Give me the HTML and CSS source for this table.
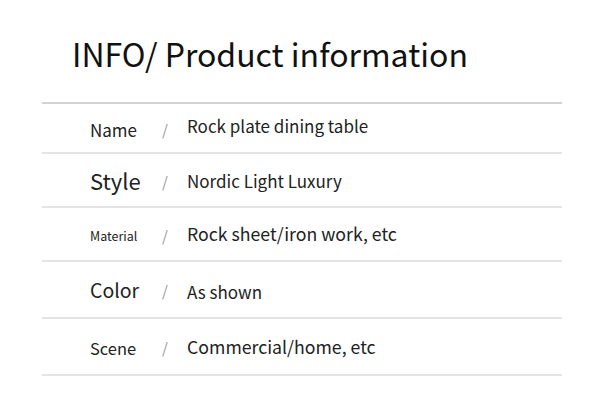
FILE: index.html
```html
<!DOCTYPE html>
<html>
<head>
<meta charset="utf-8">
<link rel="stylesheet" href="styles.css">
</head>
<body>
<div class="page">
  <h1 class="title">INFO/ Product information</h1>
  <div class="table">
    <div class="row r1"><span class="label l-name">Name</span><span class="sep">/</span><span class="value v-up">Rock plate dining table</span></div>
    <div class="row r2"><span class="label l-style">Style</span><span class="sep">/</span><span class="value">Nordic Light Luxury</span></div>
    <div class="row r3"><span class="label l-mat">Material</span><span class="sep">/</span><span class="value v-lg">Rock sheet/iron work, etc</span></div>
    <div class="row r4"><span class="label l-color">Color</span><span class="sep">/</span><span class="value v-down">As shown</span></div>
    <div class="row r5"><span class="label l-scene">Scene</span><span class="sep">/</span><span class="value v-lg">Commercial/home, etc</span></div>
  </div>
</div>
</body>
</html>
```
FILE: styles.css
```css
* { box-sizing: border-box; }
html, body { margin: 0; padding: 0; background: #fff; }
body {
  font-family: "Noto Sans CJK SC", "Noto Sans", sans-serif;
  color: #222;
  width: 600px;
  height: 406px;
  overflow: hidden;
}
.page { padding: 0 38px 0 42px; }
.title {
  margin: 0;
  padding: 30px 0 0 30px;
  height: 102px;
  font-size: 32px;
  font-weight: 400;
  line-height: 46px;
  color: #111;
}
.table { border-top: 2px solid #d2d2d2; }
.row {
  display: grid;
  grid-template-columns: 72px 25px 1fr;
  align-items: center;
  border-bottom: 2px solid #e4e4e4;
  padding-left: 48px;
}
.r1 { height: 50px; }
.r2 { height: 54px; }
.r3 { height: 54px; }
.r4 { height: 57px; }
.r5 { height: 57px; }
.label { line-height: 1; color: #222; white-space: nowrap; }
.l-name { font-size: 17px; padding-top: 2px; }
.l-style { font-size: 22px; }
.l-mat { font-size: 12.5px; padding-top: 4px; }
.l-color { font-size: 19.5px; }
.l-scene { font-size: 16.5px; padding-top: 4px; }
.sep { color: #999; font-size: 15px; line-height: 1; padding-top: 2px; }
.value { font-size: 17px; line-height: 1; color: #222; white-space: nowrap; }
.v-lg { font-size: 17.7px; }
.v-up { padding-bottom: 5px; }
.v-down { padding-top: 4px; }
```
